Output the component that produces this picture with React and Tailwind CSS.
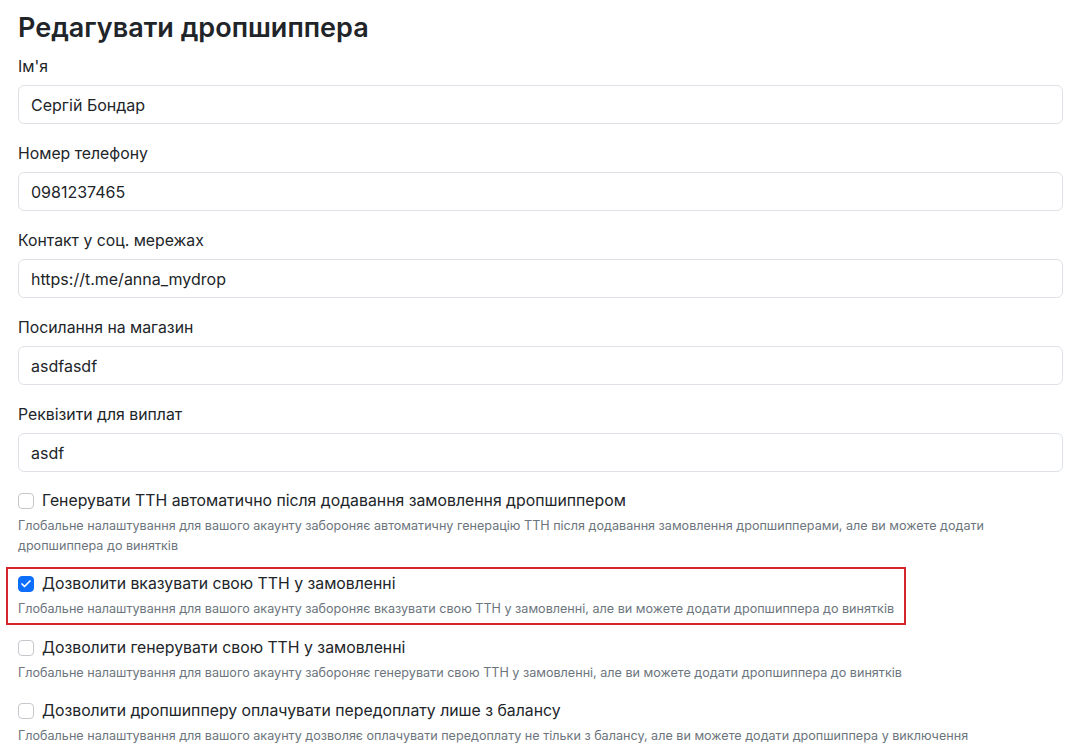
import { Check } from "lucide-react";

const fields = [
  { label: "Ім'я", value: "Сергій Бондар" },
  { label: "Номер телефону", value: "0981237465" },
  { label: "Контакт у соц. мережах", value: "https://t.me/anna_mydrop" },
  { label: "Посилання на магазин", value: "asdfasdf" },
  { label: "Реквізити для виплат", value: "asdf" },
];

const options = [
  {
    label: "Генерувати ТТН автоматично після додавання замовлення дропшиппером",
    help: "Глобальне налаштування для вашого акаунту забороняє автоматичну генерацію ТТН після додавання замовлення дропшипперами, але ви можете додати дропшиппера до винятків",
    checked: false,
  },
  {
    label: "Дозволити вказувати свою ТТН у замовленні",
    help: "Глобальне налаштування для вашого акаунту забороняє вказувати свою ТТН у замовленні, але ви можете додати дропшиппера до винятків",
    checked: true,
    marked: true,
  },
  {
    label: "Дозволити генерувати свою ТТН у замовленні",
    help: "Глобальне налаштування для вашого акаунту забороняє генерувати свою ТТН у замовленні, але ви можете додати дропшиппера до винятків",
    checked: false,
  },
  {
    label: "Дозволити дропшипперу оплачувати передоплату лише з балансу",
    help: "Глобальне налаштування для вашого акаунту дозволяє оплачувати передоплату не тільки з балансу, але ви можете додати дропшиппера у виключення",
    checked: false,
  },
];

function Checkbox({ checked }) {
  return checked ? (
    <span className="w-4 h-4 shrink-0 rounded-[4px] bg-[#0d6efd] border border-[#0d6efd] flex items-center justify-center">
      <Check className="w-3 h-3 text-white" strokeWidth={3.5} />
    </span>
  ) : (
    <span className="w-4 h-4 shrink-0 rounded-[4px] bg-white border border-[#c4c8cc]" />
  );
}

function Option({ opt, last }) {
  const body = (
    <>
      <label className="flex items-center gap-2 text-[15.8px] leading-6 text-[#212529]">
        <Checkbox checked={opt.checked} />
        {opt.label}
      </label>
      <div className="mt-[3px] text-[12.6px] leading-5 text-[#6c757d] max-w-[985px]">{opt.help}</div>
    </>
  );
  if (opt.marked) {
    return (
      <div className="-ml-[12px] -mt-[5px] mb-[11px] w-fit border-2 border-[#d6262d] pl-[10px] pr-[10px] pt-[3px] pb-[4px]">
        {body}
      </div>
    );
  }
  return <div className={last ? "" : "mb-4"}>{body}</div>;
}

export default function App() {
  return (
    <div className="bg-white pl-[18px] pr-[10px] pt-[11px] font-['Inter',sans-serif] text-[#212529]">
      <h1 className="text-[27px] leading-[34px] font-semibold mb-[10px]">Редагувати дропшиппера</h1>
      {fields.map((f) => (
        <div key={f.label} className="mb-[18px]">
          <label className="block text-[15.8px] leading-6 mb-[6px]">{f.label}</label>
          <input
            readOnly
            value={f.value}
            className="block w-full h-[39px] px-3 text-base text-[#212529] bg-white border border-[#dee2e6] rounded-[6px] outline-none"
          />
        </div>
      ))}
      <div className="-mt-[1px]">
        {options.map((o, i) => (
          <Option key={o.label} opt={o} last={i === options.length - 1} />
        ))}
      </div>
    </div>
  );
}
